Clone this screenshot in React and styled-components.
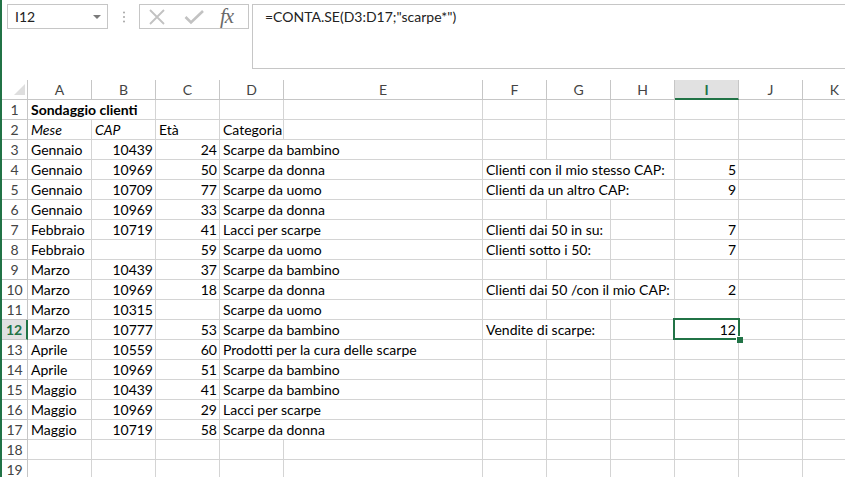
import React from 'react';
import styled, { createGlobalStyle } from 'styled-components';

const GREEN = '#217346';
const GRID = '#d4d4d4';
const HEAD_LINE = '#c6c6c6';

const COLUMNS = ['A', 'B', 'C', 'D', 'E', 'F', 'G', 'H', 'I', 'J', 'K'];
const WIDTHS = { E: 199 };

const DATA = {
  1: { A: { t: 'Sondaggio clienti', bold: true, span: 2 } },
  2: { A: { t: 'Mese', italic: true }, B: { t: 'CAP', italic: true }, C: 'Età', D: 'Categoria' },
  3: { A: 'Gennaio', B: 10439, C: 24, D: { t: 'Scarpe da bambino', span: 2 } },
  4: { A: 'Gennaio', B: 10969, C: 50, D: { t: 'Scarpe da donna', span: 2 }, F: { t: 'Clienti con il mio stesso CAP:', span: 3 }, I: 5 },
  5: { A: 'Gennaio', B: 10709, C: 77, D: { t: 'Scarpe da uomo', span: 2 }, F: { t: 'Clienti da un altro CAP:', span: 3 }, I: 9 },
  6: { A: 'Gennaio', B: 10969, C: 33, D: { t: 'Scarpe da donna', span: 2 } },
  7: { A: 'Febbraio', B: 10719, C: 41, D: { t: 'Lacci per scarpe', span: 2 }, F: { t: 'Clienti dai 50 in su:', span: 2 }, I: 7 },
  8: { A: 'Febbraio', C: 59, D: { t: 'Scarpe da uomo', span: 2 }, F: { t: 'Clienti sotto i 50:', span: 2 }, I: 7 },
  9: { A: 'Marzo', B: 10439, C: 37, D: { t: 'Scarpe da bambino', span: 2 } },
  10: { A: 'Marzo', B: 10969, C: 18, D: { t: 'Scarpe da donna', span: 2 }, F: { t: 'Clienti dai 50 /con il mio CAP:', span: 3 }, I: 2 },
  11: { A: 'Marzo', B: 10315, D: { t: 'Scarpe da uomo', span: 2 } },
  12: { A: 'Marzo', B: 10777, C: 53, D: { t: 'Scarpe da bambino', span: 2 }, F: { t: 'Vendite di scarpe:', span: 2 }, I: { t: 12, selected: true } },
  13: { A: 'Aprile', B: 10559, C: 60, D: { t: 'Prodotti per la cura delle scarpe', span: 2 } },
  14: { A: 'Aprile', B: 10969, C: 51, D: { t: 'Scarpe da bambino', span: 2 } },
  15: { A: 'Maggio', B: 10439, C: 41, D: { t: 'Scarpe da bambino', span: 2 } },
  16: { A: 'Maggio', B: 10969, C: 29, D: { t: 'Lacci per scarpe', span: 2 } },
  17: { A: 'Maggio', B: 10719, C: 58, D: { t: 'Scarpe da donna', span: 2 } },
  18: {},
  19: {},
};

const ACTIVE_COL = 'I';
const ACTIVE_ROW = 12;

const buildRow = (row) => {
  const cells = [];
  let skip = 0;
  COLUMNS.forEach((col) => {
    if (skip > 0) {
      skip -= 1;
      return;
    }
    let cell = row[col];
    if (cell === undefined) cell = { t: '' };
    else if (typeof cell !== 'object') cell = { t: cell };
    const span = cell.span || 1;
    skip = span - 1;
    cells.push({ ...cell, col, span });
  });
  return cells;
};

const App = () => (
  <>
    <GlobalStyle />
    <Window>
      <FormulaBar>
        <NameBox>
          <span>I12</span>
          <DropArrow />
        </NameBox>
        <Grip>
          <svg width="4" height="12" viewBox="0 0 4 12">
            <circle cx="2" cy="1.5" r="1" fill="#a6a6a6" />
            <circle cx="2" cy="6" r="1" fill="#a6a6a6" />
            <circle cx="2" cy="10.5" r="1" fill="#a6a6a6" />
          </svg>
        </Grip>
        <FuncButtons>
          <svg width="18" height="16" viewBox="0 0 18 16">
            <path d="M2 1 L16 15 M16 1 L2 15" stroke="#c2c2c2" strokeWidth="1.8" fill="none" />
          </svg>
          <svg width="20" height="16" viewBox="0 0 20 16">
            <path d="M1.5 8 L7 13.5 L19 2" stroke="#c2c2c2" strokeWidth="2.6" fill="none" />
          </svg>
          <FxLabel>fx</FxLabel>
        </FuncButtons>
        <FormulaInput>=CONTA.SE(D3:D17;"scarpe*")</FormulaInput>
      </FormulaBar>

      <Sheet>
        <Corner>
          <CornerMark />
        </Corner>
        {COLUMNS.map((col) => (
          <ColHead key={col} $active={col === ACTIVE_COL}>{col}</ColHead>
        ))}
        {Object.keys(DATA).map((num) => (
          <React.Fragment key={num}>
            <RowHead $active={Number(num) === ACTIVE_ROW}>{num}</RowHead>
            {buildRow(DATA[num]).map((c) => (
              <Cell
                key={c.col}
                $span={c.span}
                $right={typeof c.t === 'number'}
                $bold={c.bold}
                $italic={c.italic}
              >
                {c.t}
                {c.selected && (
                  <Selection>
                    <FillHandle />
                  </Selection>
                )}
              </Cell>
            ))}
          </React.Fragment>
        ))}
      </Sheet>
    </Window>
  </>
);

const GlobalStyle = createGlobalStyle`
  body {
    margin: 0;
    background: #fff;
    font-family: Lato, "Liberation Sans", sans-serif;
    overflow: hidden;
  }
`;

const Window = styled.div`
  height: 477px;
  border-left: 2px solid ${GREEN};
  overflow: hidden;
  color: #000;
`;

const FormulaBar = styled.div`
  height: 80px;
  box-sizing: border-box;
  padding: 4px 0 0 5px;
  display: flex;
  align-items: flex-start;
`;

const NameBox = styled.div`
  width: 101px;
  height: 25px;
  box-sizing: border-box;
  border: 1px solid ${HEAD_LINE};
  display: flex;
  align-items: center;
  justify-content: space-between;
  padding: 0 6px 0 7px;
  font-size: 14px;
  color: #222;
`;

const DropArrow = styled.span`
  width: 0;
  height: 0;
  border-left: 4px solid transparent;
  border-right: 4px solid transparent;
  border-top: 4px solid #7a7a7a;
`;

const Grip = styled.div`
  width: 31px;
  height: 25px;
  display: flex;
  align-items: center;
  justify-content: center;
`;

const FuncButtons = styled.div`
  width: 110px;
  height: 25px;
  box-sizing: border-box;
  border: 1px solid ${HEAD_LINE};
  display: flex;
  align-items: center;
  gap: 18px;
  padding: 0 0 0 8px;
`;

const FxLabel = styled.span`
  font-family: "Liberation Serif", serif;
  font-style: italic;
  font-size: 21px;
  color: #6a6a6a;
  letter-spacing: -1px;
  margin-left: -2px;
`;

const FormulaInput = styled.div`
  flex: 1;
  margin-left: 3px;
  margin-right: -10px;
  height: 65px;
  box-sizing: border-box;
  border: 1px solid ${HEAD_LINE};
  padding: 3px 0 0 12px;
  font-size: 14px;
  color: #222;
`;

const Sheet = styled.div`
  display: grid;
  grid-template-columns: 26px ${COLUMNS.map((c) => `${WIDTHS[c] || 64}px`).join(' ')};
  grid-auto-rows: 20px;
  font-size: 14px;
`;

const Corner = styled.div`
  box-sizing: border-box;
  border-right: 1px solid ${HEAD_LINE};
  border-bottom: 1px solid ${HEAD_LINE};
  display: flex;
  align-items: flex-end;
  justify-content: flex-end;
  padding: 0 2px 4px 0;
`;

const CornerMark = styled.span`
  width: 0;
  height: 0;
  border-left: 11px solid transparent;
  border-bottom: 11px solid #dedede;
`;

const ColHead = styled.div`
  box-sizing: border-box;
  border-right: 1px solid ${HEAD_LINE};
  border-bottom: ${(p) => (p.$active ? `2px solid ${GREEN}` : `1px solid ${HEAD_LINE}`)};
  background: ${(p) => (p.$active ? '#e1e1e1' : '#fff')};
  color: ${(p) => (p.$active ? GREEN : '#444')};
  font-weight: ${(p) => (p.$active ? 700 : 400)};
  text-align: center;
  line-height: 19px;
`;

const RowHead = styled.div`
  box-sizing: border-box;
  border-right: ${(p) => (p.$active ? `2px solid ${GREEN}` : `1px solid ${HEAD_LINE}`)};
  border-bottom: 1px solid ${HEAD_LINE};
  background: ${(p) => (p.$active ? '#e1e1e1' : '#fff')};
  color: ${(p) => (p.$active ? GREEN : '#444')};
  font-weight: ${(p) => (p.$active ? 700 : 400)};
  text-align: center;
  line-height: 19px;
`;

const Cell = styled.div`
  position: relative;
  grid-column: span ${(p) => p.$span};
  box-sizing: border-box;
  border-right: 1px solid ${GRID};
  border-bottom: 1px solid ${GRID};
  padding: 0 2px 0 3px;
  white-space: nowrap;
  line-height: 19px;
  text-align: ${(p) => (p.$right ? 'right' : 'left')};
  font-weight: ${(p) => (p.$bold ? 700 : 400)};
  font-style: ${(p) => (p.$italic ? 'italic' : 'normal')};
`;

const Selection = styled.div`
  position: absolute;
  top: -2px;
  left: -2px;
  right: -2px;
  bottom: -1px;
  border: 2px solid ${GREEN};
  z-index: 2;
`;

const FillHandle = styled.div`
  position: absolute;
  right: -5px;
  bottom: -5px;
  width: 6px;
  height: 6px;
  background: ${GREEN};
  border-left: 1px solid #fff;
  border-top: 1px solid #fff;
`;

export default App;
